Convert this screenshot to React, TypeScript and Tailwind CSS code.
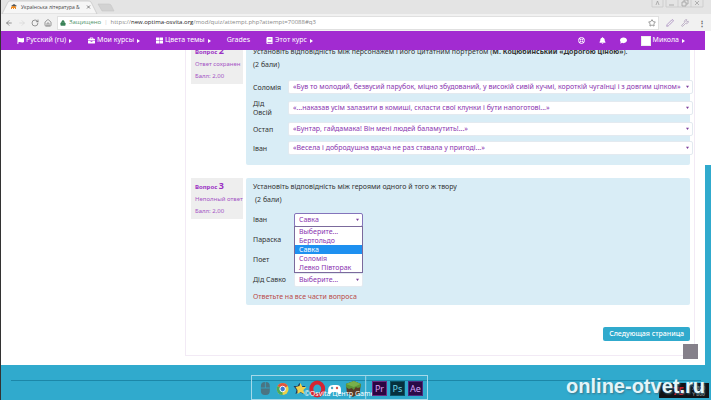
import React from 'react'
import { ArrowLeft, ArrowRight, Home, Lock, Pen, RotateCw, Star, Wrench } from 'lucide-react'
import { FaBell, FaBook, FaBriefcase, FaComment, FaFlag, FaRegLifeRing, FaThLarge } from 'react-icons/fa'

const navLinks = [
    { label: 'Русский (ru)', icon: FaFlag, arrow: true },
    { label: 'Мои курсы', icon: FaBriefcase, arrow: true },
    { label: 'Цвета темы', icon: FaThLarge, arrow: true },
    { label: 'Grades', icon: null, arrow: false },
    { label: 'Этот курс', icon: FaBook, arrow: true },
]

const quotes = [
    { name: 'Соломія', quote: '«Був то молодий, безвусий парубок, міцно збудований, у високій сивій кучмі, короткій чугаїнці і з довгим ціпком»' },
    { name: 'Дід Овсій', quote: '«...наказав усім залазити в комиші, скласти свої клунки і бути напоготові...»' },
    { name: 'Остап', quote: '«Бунтар, гайдамака! Він мені людей баламутить!...»' },
    { name: 'Іван', quote: '«Весела і добродушна вдача не раз ставала у пригоді...»' },
]

const heroes = ['Выберите...', 'Бертольдо', 'Савка', 'Соломія', 'Левко Півторак']

const Caret = ({ className }: { className: string }) => (
    <svg viewBox="0 0 4 4" className={className} aria-hidden="true">
        <path d="M0 1h4L2 4z" fill="currentColor" />
    </svg>
)

type SelectProps = { id: string; options: string[]; value: string; active?: boolean }

const Select = ({ id, options, value, active }: SelectProps) => (
    <div className="relative">
        <select
            id={id}
            defaultValue={value}
            className={
                active
                    ? 'block h-[14px] w-full appearance-none rounded-xs border border-[#8474bb] bg-white pl-1 text-[7px] text-[#8a35b0] outline-none'
                    : 'block h-[14px] w-full appearance-none rounded-xs border border-[#e3eaf0] bg-white pl-1 text-[7px] text-[#8a35b0] outline-none'
            }
        >
            {options.map((option) => <option key={option}>{option}</option>)}
        </select>
        <Caret className="pointer-events-none absolute top-[5px] right-1 size-[3px] text-[#7c3f9c]" />
    </div>
)

const QuestionInfo = ({ number, state }: { number: number; state: string }) => (
    <aside className="h-[41px] w-[52px] shrink-0 bg-[#eeeeee] pt-[2px] pl-1 text-[6px] text-[#a555c5]">
        <h3 className="text-[6px] leading-[12px] font-bold text-[#9b30c4]">
            Вопрос <span className="text-[9px]">{number}</span>
        </h3>
        <p className="leading-[12px] whitespace-nowrap">{state}</p>
        <p className="leading-[12px]">Балл: 2,00</p>
    </aside>
)

const BrowserBar = () => (
    <header className="font-['Open_Sans',sans-serif]">
        <div className="flex h-[14px] items-end justify-between bg-[#e4e4e4]">
            <div className="flex items-end">
                <svg viewBox="0 0 116 14" className="h-[14px] w-[116px]" aria-hidden="true">
                    <path d="M1 14 L7 2 Q8 1 9 1 H87 Q89 1 90 2 L96 14z" fill="#f6f6f6" stroke="#bdbdbd" strokeWidth=".6" />
                    <path d="M97 4h11q1 0 2 1l3 6h-12z" fill="#d2d2d2" stroke="#c0c0c0" strokeWidth=".5" />
                    <path d="M10 6l3-2 3 2-3 1z" fill="#555" />
                    <path d="M10 9V7q3-2 5 0v2h-1V8h-1v1h-1V8h-1v1z" fill="#f08b20" />
                    <path d="M86 5.500l3 3m0-3l-3 3" stroke="#666" strokeWidth=".8" />
                </svg>
                <span className="-ml-24 h-3 text-[5px] leading-[10px] whitespace-nowrap text-[#444]">Українська література &amp;</span>
            </div>
            <svg viewBox="0 0 60 14" className="h-[14px] w-[60px]" fill="none" stroke="#999" strokeWidth=".7" aria-hidden="true">
                <path d="M1 0v7h11V0M15 0v7h37V0M27 0v7M40 0v7" stroke="#c5c5c5" />
                <path d="M5 5l1.500-4L8 5M18 5h5M31 2h4v4h-4zM33 2V0h4v4h-2M44 1l4 4m0-4l-4 4" />
            </svg>
        </div>
        <div className="flex h-[17px] items-center gap-[5px] bg-[#f1f1f1] pr-[5px] pl-1 text-[#666]">
            <ArrowLeft className="size-2" />
            <ArrowRight className="size-2 text-[#d5d5d5]" />
            <RotateCw className="size-2" />
            <Home className="size-2" />
            <div className="flex h-[14px] flex-1 items-center gap-[3px] border border-[#e0e0e0] bg-white px-[2px] text-[6px]">
                <Lock className="size-[6px] fill-[#3b8358] text-[#3b8358]" />
                <span className="text-[#4c9268]">Защищено</span>
                <span className="text-[#ccc]">|</span>
                <span className="flex-1 text-[#888]">https://<span className="text-[#222]">new.optima-osvita.org</span>/mod/quiz/attempt.php?attempt=70088#q3</span>
                <Star className="size-2" />
            </div>
            <Pen className="mx-[2px] size-2 text-[#9875b5]" />
            <Wrench className="mr-1 size-2 text-[#a896b5]" />
            <span className="text-[8px] font-bold">⋮</span>
        </div>
    </header>
)

const Navbar = () => (
    <nav className="relative z-10 mr-[6px] flex h-[19px] items-center justify-between bg-[#a22bd1] pr-5 pl-4 text-[7px] text-white">
        <div className="flex items-center gap-4">
            {navLinks.map(({ label, icon: Icon, arrow }) => (
                <a key={label} href="#" className="flex items-center gap-[2px] whitespace-nowrap">
                    {Icon && <Icon className="size-[7px]" />}
                    {label}
                    {arrow && <Caret className="size-[4px] -rotate-90" />}
                </a>
            ))}
        </div>
        <div className="flex items-center gap-[14px]">
            <button aria-label="Помощь"><FaRegLifeRing className="size-[7px]" /></button>
            <button aria-label="Уведомления"><FaBell className="size-[7px]" /></button>
            <button aria-label="Сообщения"><FaComment className="size-[7px]" /></button>
            <a href="#" className="flex items-center gap-[2px]">
                <span className="size-[10px] border border-[#eee] bg-white" />
                Микола
                <Caret className="size-[4px] -rotate-90" />
            </a>
        </div>
    </nav>
)

const QuoteQuestion = () => (
    <section className="flex gap-[3px]">
        <QuestionInfo number={2} state="Ответ сохранен" />
        <div className="min-w-0 flex-1 rounded-xs bg-[#d9edf6] px-[7px] pt-[2px] pb-[10px]">
            <p className="leading-[14px] whitespace-nowrap">
                Установіть відповідність між персонажем і його цитатним портретом (<b>М. Коцюбинський «Дорогою ціною»</b>).
            </p>
            <p className="leading-3">(2 бали)</p>
            <div className="-mr-[10px] mt-[9px] flex flex-col gap-[5px]">
                {quotes.map(({ name, quote }, i) => (
                    <div key={name} className="flex items-center">
                        <label htmlFor={`quote-${i}`} className="w-[35px] shrink-0 pr-[6px] leading-[9px]">{name}</label>
                        <div className="min-w-0 flex-1"><Select id={`quote-${i}`} options={[quote]} value={quote} /></div>
                    </div>
                ))}
            </div>
        </div>
    </section>
)

const HeroQuestion = () => (
    <section className="flex gap-[3px]">
        <QuestionInfo number={3} state="Неполный ответ" />
        <div className="min-w-0 flex-1 rounded-xs bg-[#d9edf6] px-[7px] pt-[2px] pb-px">
            <p className="leading-[14px]">Установіть відповідність між героями одного й того ж твору</p>
            <p className="pl-[2px] leading-3">(2 бали)</p>
            <div className="mt-[7px] flex flex-col gap-[6px]">
                {['Іван', 'Параска', 'Поет', 'Дід Савко'].map((name, i) => (
                    <div key={name} className="flex items-center">
                        <label htmlFor={`hero-${i}`} className="w-[41px] shrink-0 whitespace-nowrap">{name}</label>
                        <div className="relative w-[69px]">
                            <Select id={`hero-${i}`} options={heroes} value={i === 0 ? 'Савка' : 'Выберите...'} active={i === 0} />
                            {i === 0 && (
                                <ul role="listbox" className="absolute top-[13px] left-0 z-20 w-full border border-[#7b6a9c] bg-white text-[7px] leading-[9px] text-[#8a35b0]">
                                    {heroes.map((hero) => (
                                        <li
                                            key={hero}
                                            role="option"
                                            aria-selected={hero === 'Савка'}
                                            className="pl-1 whitespace-nowrap aria-selected:bg-[#1e90f0] aria-selected:text-white"
                                        >
                                            {hero}
                                        </li>
                                    ))}
                                </ul>
                            )}
                        </div>
                    </div>
                ))}
            </div>
            <p className="mt-[3px] leading-[14px] text-[#b94a48]">Ответьте на все части вопроса</p>
        </div>
    </section>
)

const Dock = () => (
    <div className="absolute top-[10px] left-[250px] flex h-[25px] w-[177px] items-center border border-[#a5d9e9]">
        <svg viewBox="0 0 177 24" className="h-6 w-full" aria-hidden="true">
            <path d="M115 0v24" stroke="#a5d9e9" />
            <rect x="9" y="6" width="9" height="13" rx="4" fill="#4b7482" />
            <path d="M9 12h9M13.500 6v6" stroke="#30aacd" strokeWidth=".8" />
            <circle cx="31" cy="13" r="6" fill="#ead14a" />
            <path d="M31 13L25.800 10A6 6 0 0 1 36.200 10z" fill="#e2553f" />
            <path d="M31 13L25.800 10A6 6 0 0 0 31 19z" fill="#48a95b" />
            <circle cx="31" cy="13" r="2.800" fill="#3e78d0" stroke="#fff" />
            <path d="M48 7l2 3 4 0-3 4 1 4-4-2-4 2 1-4-3-4 4 0z" fill="#243c58" />
            <path d="M49 7l2 4 4 0-3 3 1 4-4-2-3 2 0-4-2-3 4-1z" fill="#f1d04c" />
            <ellipse cx="66" cy="13" rx="6" ry="6.500" fill="none" stroke="#d62532" strokeWidth="4" />
            <path d="M77 17q-1-8 5-8h4q5 0 4 8-1 3-4-1h-5q-3 4-4 1" fill="#fff" />
            <circle cx="81" cy="12" r="1.200" fill="#4fa7c2" />
            <circle cx="86" cy="12" r="1.200" fill="#d8584d" />
            <path d="M95 8l8-3 7 3-1 9-7 4-6-4z" fill="#593b28" />
            <path d="M95 8l8-3 7 3v3l-3 1-2-1-2 3-2-2-3 1-3-2z" fill="#5c9538" />
            <path d="M95 8l8-3 7 3-7 3z" fill="#78b04a" />
        </svg>
    </div>
)

const Footer = () => (
    <footer className="relative h-[35px] overflow-hidden bg-[#30aacd] px-[10px] pt-[15px]">
        <hr className="border-[#1c87a8]" />
        <Dock />
        <p className="relative pt-[5px] pl-[293px] text-[7px] leading-4 text-white">©Osvita Центр Game</p>
        <div className="absolute top-[16px] left-[371px] flex gap-[3px] text-[9px] leading-[14px]">
            <span className="w-[15px] border border-[#6b2a80] bg-[#2b0641] text-center leading-[13px] text-[#dba0f0]">Pr</span>
            <span className="w-[15px] border border-[#0b5264] bg-[#06303d] text-center leading-[13px] text-[#6cd5ea]">Ps</span>
            <span className="w-[15px] border border-[#4b2a80] bg-[#2b0b47] text-center leading-[13px] text-[#d2a5f5]">Ae</span>
        </div>
        <div className="absolute right-[2px] bottom-[2px] flex h-[15px] w-[50px] items-center justify-end bg-[#101216] pr-1 text-[5px] leading-[6px] text-[#aaa]">
            <span className="mr-2 text-[10px] font-bold text-[#c5202c]">75</span>
            <span>X 800<br />Y 800</span>
        </div>
        <strong className="absolute right-[6px] bottom-[4px] font-['Liberation_Sans',sans-serif] text-[20px] leading-5 text-[#e3f5fa] [text-shadow:1px_1px_2px_#3c7487]">online-otvet.ru</strong>
    </footer>
)

const App = () => {
    return (
        <div className="flex min-h-screen flex-col overflow-hidden border-l border-[#333] bg-white font-['Noto_Sans',sans-serif] text-[7px] text-[#333]">
            <BrowserBar />
            <Navbar />
            <div className="relative flex-1">
                <div className="absolute top-[115px] right-0 bottom-0 w-[6px] bg-[#30aacd]" />
                <main className="mr-4 ml-[184px] flex flex-col border-x border-b border-[#f2eaf5] pr-1 pb-[14px] pl-[5px]">
                    <div className="-mt-[7px] flex flex-col gap-[13px]">
                        <QuoteQuestion />
                        <HeroQuestion />
                    </div>
                    <button className="mt-[22px] h-[14px] self-end rounded-xs bg-[#30aacd] px-[6px] text-[7px] font-medium text-white">
                        Следующая страница
                    </button>
                </main>
                <button aria-label="Наверх" className="absolute right-[13px] bottom-[6px] size-[15px] bg-[#85808a]" />
            </div>
            <Footer />
        </div>
    )
}

export default App
